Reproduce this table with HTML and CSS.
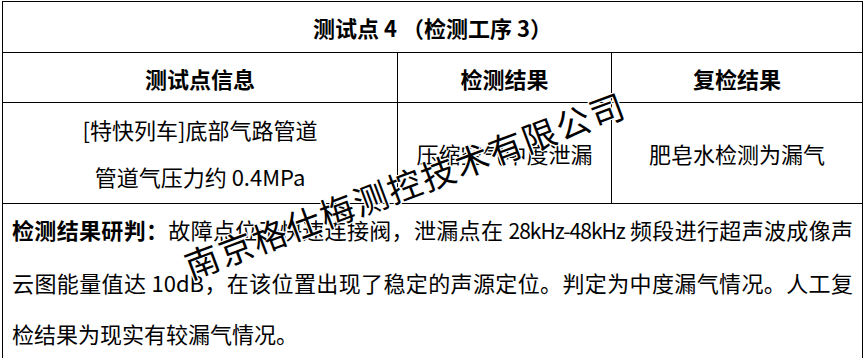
FILE: index.html
```html
<!DOCTYPE html>
<html lang="zh-CN">
<head>
<meta charset="utf-8">
<title>测试点 4</title>
<link rel="stylesheet" href="styles.css">
</head>
<body>
<div class="page">
  <table class="report">
    <colgroup>
      <col class="c1">
      <col class="c2">
      <col class="c3">
    </colgroup>
    <tr class="row-title">
      <th colspan="3">测试点 4 （检测工序 3）</th>
    </tr>
    <tr class="row-head">
      <th>测试点信息</th>
      <th>检测结果</th>
      <th>复检结果</th>
    </tr>
    <tr class="row-body">
      <td>
        <div class="info">[特快列车]底部气路管道</div>
        <div class="info">管道气压力约 0.4MPa</div>
      </td>
      <td>压缩空气中度泄漏</td>
      <td>肥皂水检测为漏气</td>
    </tr>
    <tr class="row-verdict">
      <td colspan="3" class="verdict">
        <span class="line just"><strong>检测结果研判：</strong>故障点位于快速连接阀，泄漏点在 <span class="en">28kHz-48kHz</span> 频段进行超声波成像声</span>
        <span class="line just">云图能量值达 10dB，在该位置出现了稳定的声源定位。判定为中度漏气情况。人工复</span>
        <span class="line">检结果为现实有较漏气情况。</span>
      </td>
    </tr>
  </table>
  <div class="watermark">南京格仕梅测控技术有限公司</div>
</div>
</body>
</html>
```
FILE: styles.css
```css
html, body {
  margin: 0;
  padding: 0;
  background: #ffffff;
}

body {
  font-family: "Noto Sans CJK SC", "Noto Sans", sans-serif;
  font-size: 22px;
  color: #000000;
}

.page {
  position: relative;
  padding: 1px 0 0 2px;
  width: 865px;
  height: 358px;
  box-sizing: border-box;
  overflow: hidden;
}

.report {
  border-collapse: collapse;
  table-layout: fixed;
  width: 860px;
}

.c1 { width: 395px; }
.c2 { width: 214px; }
.c3 { width: 251px; }

.report th,
.report td {
  border: 1px solid #000000;
  padding: 0;
  text-align: center;
  vertical-align: middle;
  font-size: 22px;
}

.report th {
  font-weight: 700;
}

.row-title th { height: 50px; }
.row-head th { height: 49px; }
.row-body td { height: 100px; }
.row-verdict td { height: 150px; }

.info {
  line-height: 47px;
}

.verdict {
  text-align: left !important;
  vertical-align: top !important;
  padding: 0 9px !important;
  line-height: 51.5px;
}

.verdict strong {
  font-weight: 700;
}

.line {
  display: block;
  text-align: left;
}

.line.just {
  text-align: justify;
  text-align-last: justify;
}

.en {
  font-size: 21px;
  letter-spacing: -1px;
}

.watermark {
  position: absolute;
  left: 404px;
  top: 185px;
  transform: translate(-50%, -50%) rotate(-20.5deg);
  font-size: 34px;
  font-weight: 400;
  letter-spacing: 2px;
  padding-left: 2px;
  line-height: 1;
  white-space: nowrap;
  color: #000000;
  text-shadow:
    1px 0 0 #fff, -1px 0 0 #fff, 0 1px 0 #fff, 0 -1px 0 #fff,
    1px 1px 0 #fff, -1px -1px 0 #fff, 1px -1px 0 #fff, -1px 1px 0 #fff;
}
```
